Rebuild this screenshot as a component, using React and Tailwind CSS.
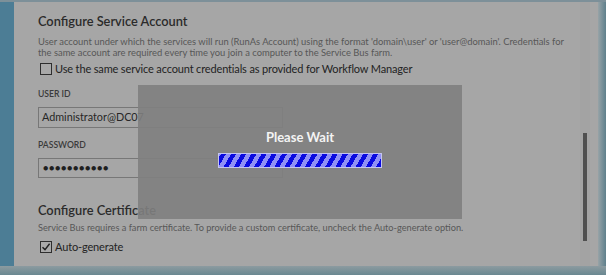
import React from 'react';

const font = { fontFamily: 'Lato, "Noto Sans", sans-serif' };

const Checkbox = ({ checked }) => (
  <div className="w-[12px] h-[12px] border border-[#2e2e2e] bg-[#a9a9a9] flex items-center justify-center">
    {checked && (
      <svg width="10" height="10" viewBox="0 0 10 10">
        <path d="M1.5 5.2 L4 7.6 L8.6 1.8" fill="none" stroke="#1f1f1f" strokeWidth="1.4" />
      </svg>
    )}
  </div>
);

const Label = ({ children, className = '' }) => (
  <div className={`text-[8.6px] font-semibold text-[#3a3a3a] leading-none ${className}`}>{children}</div>
);

export default function App() {
  return (
    <div className="w-[606px] h-[275px] relative overflow-hidden bg-[#a6a6a6] flex flex-col" style={font}>
      {/* top edge */}
      <div className="h-[2px] bg-[#7d9099]" />

      <div className="flex-1 flex min-h-0">
        {/* left accent strip */}
        <div className="w-[14px] bg-[#4c7d95]" />

        {/* form content */}
        <div className="flex-1 pl-[24px] pt-[10px] min-w-0">
          <h2 className="text-[12.8px] font-semibold text-[#2b2b2b] leading-[18px]">Configure Service Account</h2>
          <p className="mt-[6px] text-[9.4px] leading-[11px] text-[#575757] w-[540px]">
            User account under which the services will run (RunAs Account) using the format 'domain\user' or 'user@domain'. Credentials for the same account are required every time you join a computer to the Service Bus farm.
          </p>
          <div className="mt-[4px] flex items-center gap-[3px] pl-[2px]">
            <Checkbox />
            <span className="text-[11px] tracking-[-0.15px] text-[#232323] leading-[14px]">Use the same service account credentials as provided for Workflow Manager</span>
          </div>

          <Label className="mt-[14px]">USER ID</Label>
          <div className="mt-[8px] w-[245px] h-[21px] border border-[#777] flex items-center pl-[3px]">
            <span className="text-[10.8px] text-[#262626]">Administrator@DC07</span>
          </div>

          <Label className="mt-[13px]">PASSWORD</Label>
          <div className="mt-[9px] w-[245px] h-[20px] border border-[#777] flex items-center pl-[4px]">
            <span className="text-[9px] tracking-[0.6px] text-[#1f1f1f]">●●●●●●●●●●●</span>
          </div>

          <h2 className="mt-[23px] text-[12.8px] font-semibold text-[#2b2b2b] leading-[18px]">Configure Certificate</h2>
          <p className="mt-[3px] text-[9.2px] leading-[11px] text-[#575757]">
            Service Bus requires a farm certificate. To provide a custom certificate, uncheck the Auto-generate option.
          </p>
          <div className="mt-[7px] flex items-center gap-[3px] pl-[2px]">
            <Checkbox checked />
            <span className="text-[11px] tracking-[-0.15px] text-[#232323] leading-[14px]">Auto-generate</span>
          </div>
          <Label className="mt-[15px]">CERTIFICATE GENERATION KEY</Label>
        </div>

        {/* scrollbar */}
        <div className="w-[10px] mr-[8px] flex justify-center bg-[#a3a3a3]">
          <div className="w-[4px] flex flex-col">
            <div className="h-[131px]" />
            <div className="h-[108px] bg-[#4f4f4f]" />
          </div>
        </div>

        {/* right frame edge */}
        <div className="w-[8px] bg-gradient-to-r from-[#97a3a7] to-[#5f808c]" />
      </div>

      {/* bottom frame edge */}
      <div className="h-[9px] bg-gradient-to-b from-[#8c9ba0] to-[#6a8891]" />

      {/* Please wait overlay */}
      <div className="absolute left-[138px] top-[85px] w-[324px] h-[134px] bg-[#808080]/90 flex flex-col items-center pt-[44px]">
        <div className="text-[13px] font-bold text-[#f4f4f4] leading-[16px]">Please Wait</div>
        <div className="mt-[8px] w-[164px] h-[15px] border border-[#c4c4f0] bg-[repeating-linear-gradient(-60deg,#0a0ae0_0px,#0a0ae0_4.4px,#9090f6_4.4px,#9090f6_8.8px)]" />
      </div>
    </div>
  );
}
